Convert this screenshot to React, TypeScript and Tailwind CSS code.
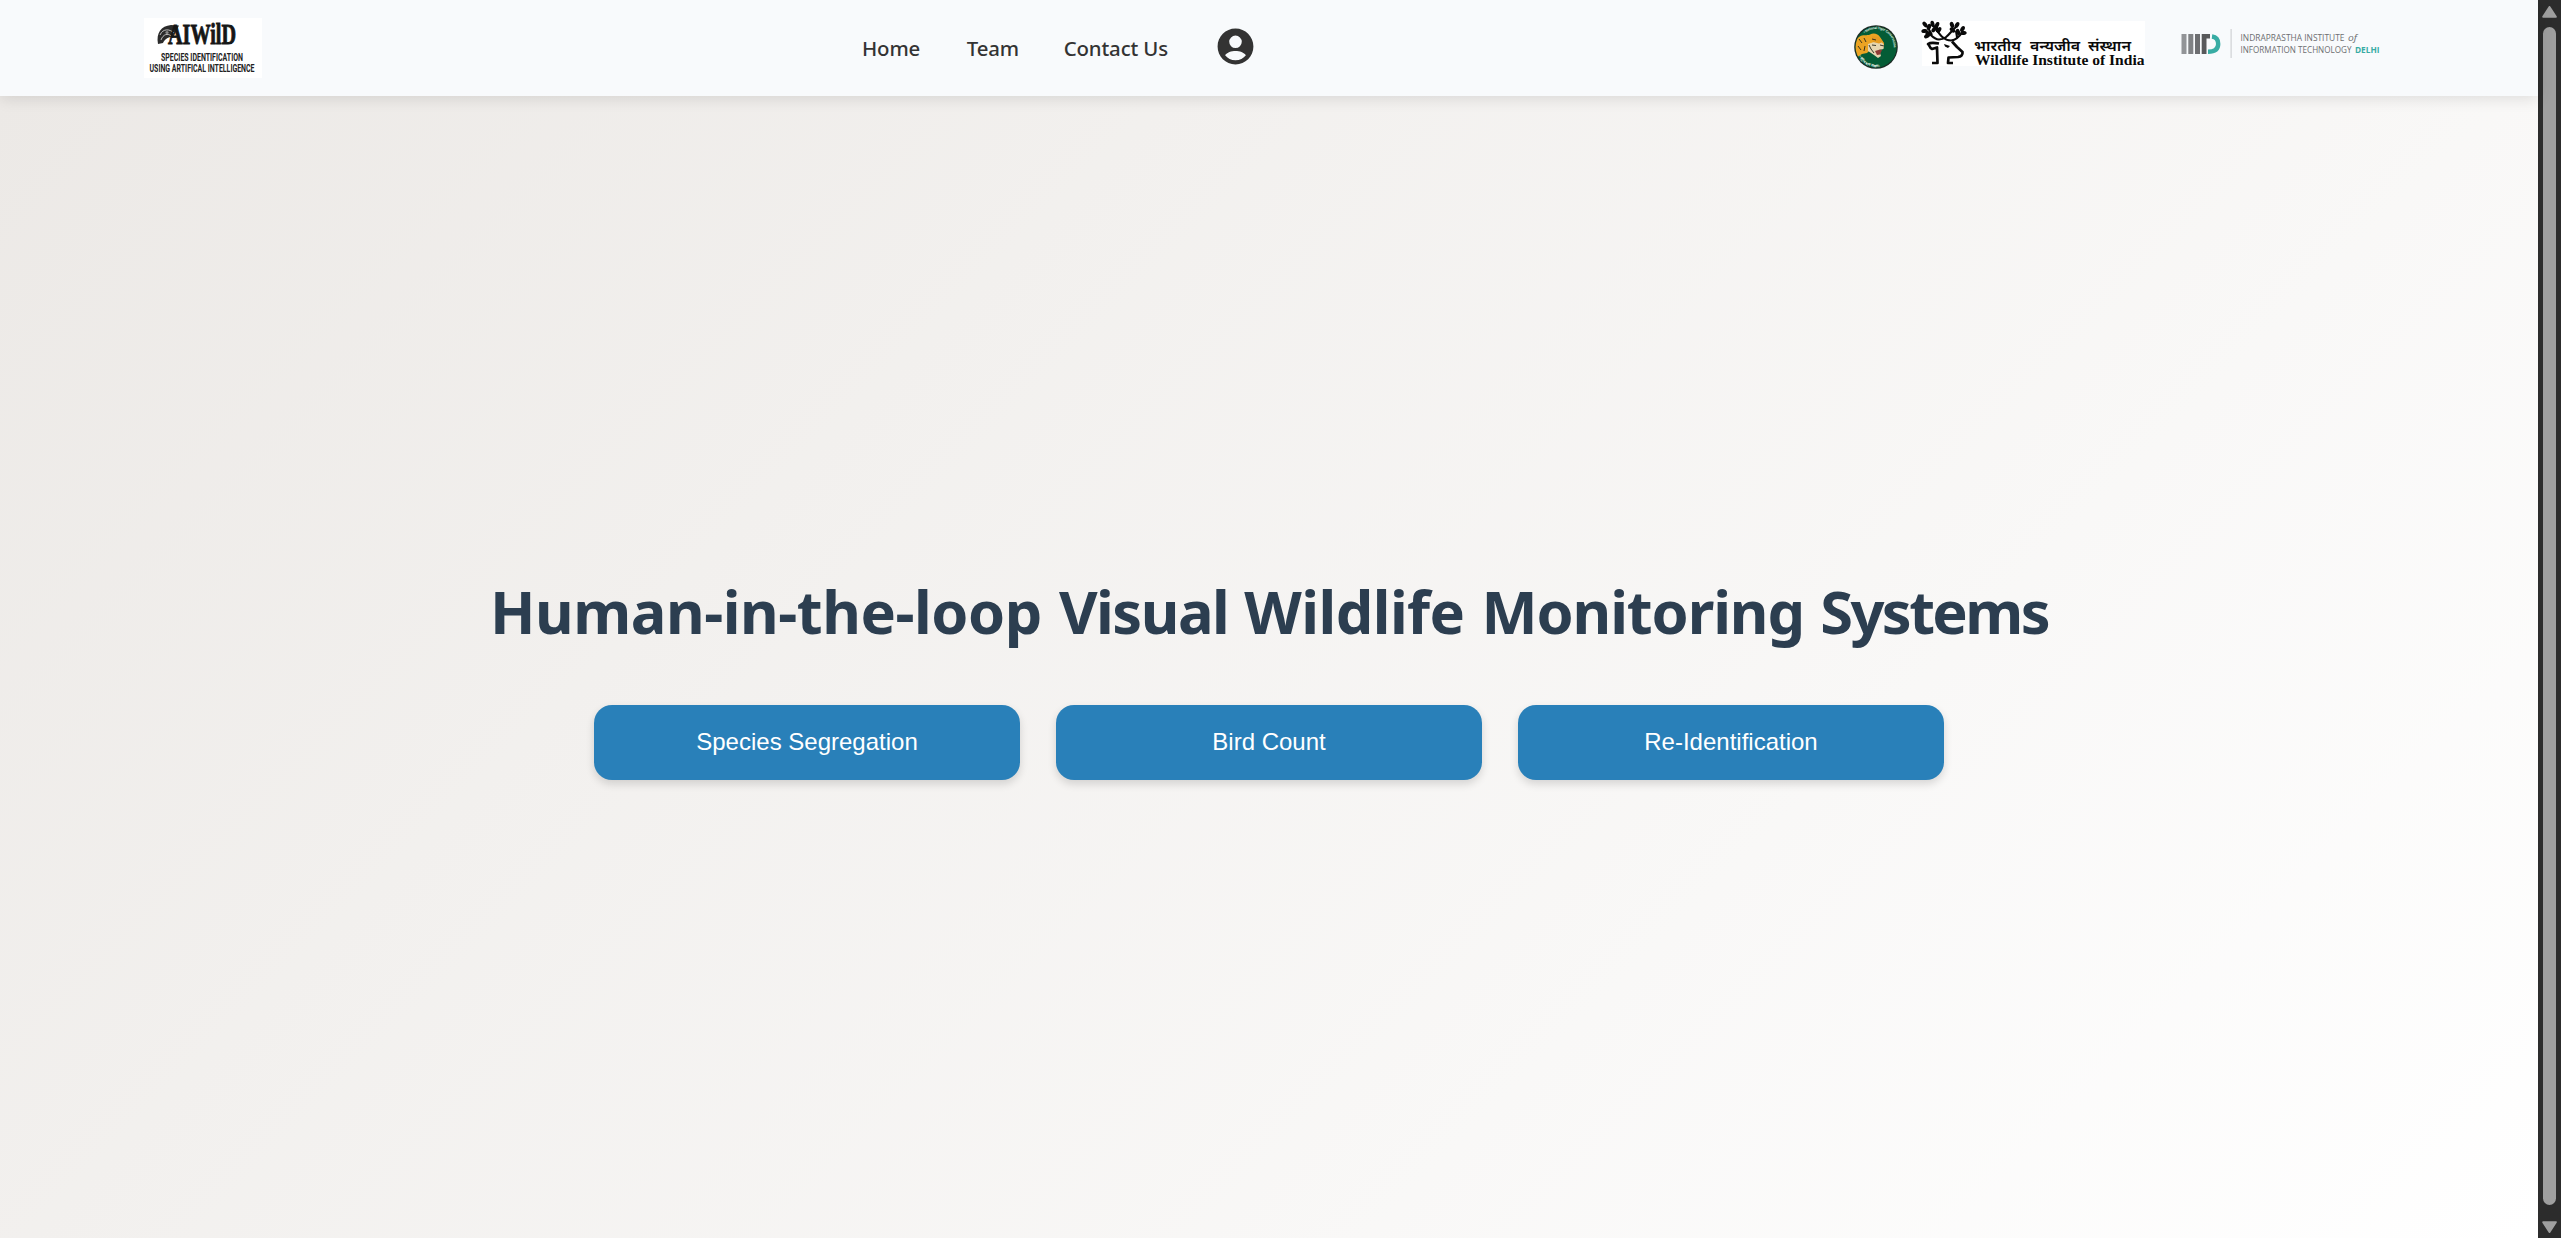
import React from 'react';

const SANS = "font-['Noto_Sans','Open_Sans',sans-serif]";

function AiWildLogo() {
  return (
    <svg width="118" height="60" viewBox="144 18 118 60" className="block shrink-0 overflow-visible">
      <rect x="144" y="18" width="118" height="60" fill="#fff" />
      <path d="M158 44 C156 33 161 26 171 25 L179 25.500 L173 38 C169 36 165 39 163 43 Z" fill="#2b2b2b" />
      <path d="M160 35 C163 28 170 29 174 33 M161 40 C163 34 168 33 171 36" fill="none" stroke="#ccc" strokeWidth="0.9" />
      <circle cx="167" cy="32.5" r="1.6" fill="#888" />
      <g fill="#161616" fontFamily="Liberation Serif, serif" fontWeight="700" stroke="#161616" strokeWidth="0.9">
        <text x="168" y="44" fontSize="28.5" textLength="68" lengthAdjust="spacingAndGlyphs">AIWilD</text>
      </g>
      <g fill="#222" fontFamily="Roboto, sans-serif" fontWeight="700">
        <text x="161" y="61" fontSize="10" textLength="82" lengthAdjust="spacingAndGlyphs">SPECIES IDENTIFICATION</text>
        <text x="149.500" y="72" fontSize="10" textLength="105" lengthAdjust="spacingAndGlyphs">USING ARTIFICAL INTELLIGENCE</text>
      </g>
    </svg>
  );
}

function TigerLogo() {
  return (
    <svg width="44" height="44" viewBox="0 0 44 44" className="mt-[25px] block shrink-0">
      <defs>
        <clipPath id="disc"><circle cx="22" cy="22" r="20.4" /></clipPath>
        <path id="arcTop" d="M10 7.500 A18.500 18.500 0 0 1 38 31" />
        <path id="arcBottom" d="M5 31 A19.500 19.500 0 0 0 36 37" />
      </defs>
      <circle cx="22" cy="22" r="21.8" fill="#1c2a24" />
      <circle cx="22" cy="22" r="20.6" fill="#045c36" />
      <g clipPath="url(#disc)">
        <path d="M-1 17 L5 12 C9 9 13 11 16 9.500 C20 7.500 24 9 26 12 L30 18 L30 22 L24 24 L17 24 L13 28 L8 29 L2 33 Z" fill="#eba322" />
        <path d="M14 19 L20 17 L26 15 L30 20 L29.500 24 L25 25 L27 31 L24 33 L20 30 L14 26 Z" fill="#e6d5b0" />
        <path d="M18 11 L25 12 L29 17 L25 18.500 L19 17 Z" fill="#e59b22" />
        <path d="M21 26 L26 24.500 L28 25 L26 29.500 L23 30 Z" fill="#8e3b35" />
        <path d="M5 14 L8 18 M10 13 L12 17 M4 21 L7 25 M11 21 L10 26 M15 20 L17 24 L20 28 M18 14 L22 15 M26 20 L30 21 M18 20 L22 20.500" fill="none" stroke="#27271c" strokeWidth="0.9" />
      </g>
      <g fill="#e3efe6" fontFamily="Liberation Sans, sans-serif" fontSize="3.4" fontWeight="700">
        <text dy="1"><textPath href="#arcTop" textLength="43" lengthAdjust="spacingAndGlyphs">• National Tiger Conservation</textPath></text>
        <text><textPath href="#arcBottom">• राष्ट्रीय बाघ संरक्षण •</textPath></text>
      </g>
    </svg>
  );
}

function WiiLogo() {
  return (
    <svg width="223" height="45" viewBox="1922 21 223 45" className="mt-[21px] block shrink-0 overflow-visible">
      <rect x="1922" y="21" width="223" height="45" fill="#fff" />
      <g fill="none" stroke="#0a0a0a" strokeLinejoin="round">
        <path d="M1924 30 C1931 33 1932 39 1939 39.500 C1947 39.500 1950 32 1956 27 M1963 31 C1960 36 1957 40 1951 40.500 C1942 40 1939 33 1933 25 M1927 26 L1932 35 M1937 26 L1937 32 M1957 37 L1956 31" strokeWidth="2.1" />
        <path d="M1939 43.500 C1934 42.500 1930 42.500 1928 44 C1930 45 1929 48 1932 49 L1937 47.500 L1937.500 63 L1932 63" strokeWidth="2.7" />
        <path d="M1952 41.500 L1957 47 L1962.500 52 C1963 55 1961 56.500 1958 57 L1948.500 57.500 L1948 63 L1953 63" strokeWidth="2.7" />
      </g>
      <g fill="#0a0a0a">
        <path d="M1944 44 L1950 46 L1948 48 L1945 46.500 Z" />
        {[
          [1925, 24.5, -40], [1924.5, 31, 80], [1929, 27, 20], [1932.5, 24, -10], [1937, 25, 25], [1928.5, 33.5, 70], [1934, 29.5, 40],
          [1939, 30, 30], [1952, 25, -20], [1957, 25, 30], [1952.5, 30, -50], [1962.5, 29, 30], [1958, 32, -20], [1963.5, 33, 80], [1927, 36, 60],
        ].map(([x, y, r], i) => (
          <ellipse key={i} cx={x} cy={y} rx="2" ry="3.2" transform={`rotate(${r} ${x} ${y})`} />
        ))}
        <g fontSize="13.500" fontWeight="600" fontFamily="Noto Sans Devanagari, Noto Sans, sans-serif">
          <text x="1974" y="50.800" textLength="47" lengthAdjust="spacingAndGlyphs">भारतीय</text>
          <text x="2030" y="50.800" textLength="50" lengthAdjust="spacingAndGlyphs">वन्यजीव</text>
          <text x="2088" y="50.800" textLength="43" lengthAdjust="spacingAndGlyphs">संस्थान</text>
        </g>
        <text x="1975" y="65" fontSize="14.4" fontWeight="700" fontFamily="Liberation Serif, serif" textLength="169.500" lengthAdjust="spacingAndGlyphs">Wildlife Institute of India</text>
      </g>
    </svg>
  );
}

function IiitdLogo() {
  return (
    <svg width="200" height="34" viewBox="2180 27 200 34" className="mt-[27px] block shrink-0 overflow-visible">
      <rect x="2181.5" y="34" width="5" height="20" fill="#929497" />
      <rect x="2188.3" y="34" width="5" height="20" fill="#808285" />
      <rect x="2195" y="34" width="5" height="20" fill="#6d6e71" />
      <path d="M2201.7 34 H2210 V38.5 H2206.5 V54 H2201.7 Z" fill="#58595b" />
      <path d="M2212 36.5 C2216.5 37 2218.2 40 2218.2 44 C2218.2 49 2215 51.7 2208 51.7" fill="none" stroke="#38aca4" strokeWidth="4.4" />
      <rect x="2230.5" y="29" width="1.2" height="29" fill="#cfd1d4" />
      <g fill="#6d6e71" fontFamily="Open Sans, sans-serif" fontSize="9.2">
        <text x="2240.500" y="40.6" textLength="104" lengthAdjust="spacingAndGlyphs">INDRAPRASTHA INSTITUTE</text>
        <text x="2348" y="40.6" fontStyle="italic" fontSize="9.800" textLength="9" lengthAdjust="spacingAndGlyphs">of</text>
        <text x="2240.500" y="53" textLength="111" lengthAdjust="spacingAndGlyphs">INFORMATION TECHNOLOGY</text>
        <text x="2355" y="53" fill="#38aca4" fontWeight="700" textLength="24.500" lengthAdjust="spacingAndGlyphs">DELHI</text>
      </g>
    </svg>
  );
}

function Header() {
  return (
    <header className="relative z-10 flex h-24 shrink-0 items-start bg-[#f8fafc] pl-36 shadow-[0_2px_15px_rgba(0,0,0,0.12)]">
      <a className="mt-[18px]"><AiWildLogo /></a>
      <nav className="ml-[600px] flex h-24 w-[395px] shrink-0 items-center text-[20.4px] font-medium tracking-[-0.15px] whitespace-nowrap text-[#333]">
        <a className="w-[106px]">Home</a>
        <a className="w-[98px]">Team</a>
        <a className="w-[152px]">Contact Us</a>
        <svg width="43" height="43" viewBox="0 0 24 24" className="mb-1 shrink-0" fill="#333">
          <path d="M12 2C6.48 2 2 6.48 2 12s4.480 10 10 10 10-4.480 10-10S17.520 2 12 2zm0 3.900a3.500 3.500 0 1 1 0 7 3.500 3.500 0 0 1 0-7zm0 13.800c-2.400 0-4.500-1.100-5.800-2.800 1-1.600 3.500-2.400 5.800-2.400s4.800.8 5.800 2.400c-1.300 1.700-3.400 2.800-5.800 2.800z" />
        </svg>
      </nav>
      <div className="ml-[597px] flex items-start">
        <TigerLogo />
        <div className="ml-[24px]"><WiiLogo /></div>
        <div className="ml-[35px]"><IiitdLogo /></div>
      </div>
    </header>
  );
}

function Scrollbar() {
  return (
    <div className="flex h-full w-[23px] shrink-0 flex-col items-center bg-[#2c2c2c]">
      <svg width="15" height="12" viewBox="0 0 15 12" className="mt-1.5 shrink-0"><path d="M7.500 1 L13.800 10.800 H1.200 Z" fill="#9f9f9f" stroke="#9f9f9f" strokeWidth="2" strokeLinejoin="round" /></svg>
      <div className="mt-[9px] h-[1178px] w-[13px] shrink-0 rounded-full bg-[#9f9f9f]" />
      <svg width="15" height="12" viewBox="0 0 15 12" className="mt-4 shrink-0"><path d="M7.500 11 L13.800 1.200 H1.200 Z" fill="#9f9f9f" stroke="#9f9f9f" strokeWidth="2" strokeLinejoin="round" /></svg>
    </div>
  );
}

const ACTIONS = ['Species Segregation', 'Bird Count', 'Re-Identification'];

export default function App() {
  return (
    <div className={`flex h-[1238px] w-[2561px] overflow-hidden ${SANS}`}>
      <div className="flex min-w-0 flex-1 flex-col">
        <Header />
        <main className="flex flex-1 flex-col items-center bg-[linear-gradient(135deg,#ece9e6,#ffffff)] pt-[470px]">
          <h1 className="h-[90px] text-[59.5px] leading-[90px] font-bold whitespace-nowrap text-[#2c3e50] [word-spacing:2px]">
            <span className="tracking-[-0.47px]">Human-in-the-loop </span>
            <span className="tracking-[-1.5px]">Visual </span>
            <span className="tracking-[-0.55px]">Wildlife </span>
            <span className="tracking-[-1.1px]">Monitoring </span>
            <span className="tracking-[-2.6px]">Systems</span>
          </h1>
          <div className="mt-[49px] flex gap-9">
            {ACTIONS.map((label) => (
              <button key={label} className="h-[75px] w-[426px] rounded-[18px] bg-[#2980b9] pb-0.5 font-['Liberation_Sans',sans-serif] text-2xl text-white shadow-[0_4px_9px_rgba(0,0,0,0.14)]">{label}</button>
            ))}
          </div>
        </main>
      </div>
      <Scrollbar />
    </div>
  );
}
